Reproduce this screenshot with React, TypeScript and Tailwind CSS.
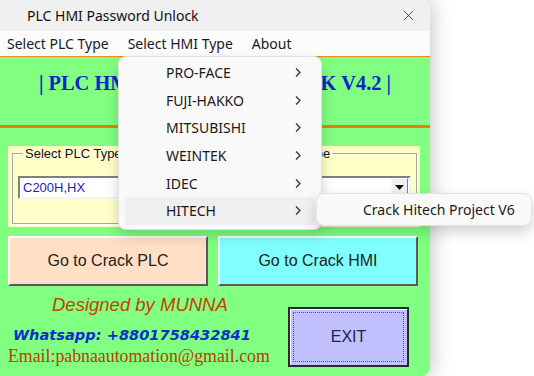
import { X } from 'lucide-react';

const hmiTypes = ['PRO-FACE', 'FUJI-HAKKO', 'MITSUBISHI', 'WEINTEK', 'IDEC', 'HITECH'];

function Chevron() {
  return (
    <svg width="8" height="11" viewBox="0 0 8 11" className="shrink-0">
      <path d="M2 1.5 L6 5.5 L2 9.5" fill="none" stroke="#333" strokeWidth="1.3" />
    </svg>
  );
}

function ComboBox({ value }: { value: string }) {
  return (
    <div className="flex h-[23px] items-center border-2 border-t-[#808080] border-l-[#808080] border-b-[#f4f4f4] border-r-[#f4f4f4] bg-white">
      <div className="flex h-full flex-1 items-center px-[3px] font-['Liberation_Sans',sans-serif] text-[13px] text-[#1c1cc4]">
        {value}
      </div>
      <div className="mr-[1px] flex h-[19px] w-[17px] items-center justify-center border border-t-[#f8f8f8] border-l-[#f8f8f8] border-b-[#808080] border-r-[#808080] bg-[#f0f0f0]">
        <svg width="9" height="5" viewBox="0 0 9 5">
          <path d="M0 0 H9 L4.5 5 Z" fill="#111" />
        </svg>
      </div>
    </div>
  );
}

function GroupBox({ title, value }: { title: string; value: string }) {
  return (
    <fieldset className="h-[78px] border border-[#a8a8a0] px-[5px] shadow-[inset_1px_1px_0_#ffffff,1px_1px_0_#ffffff]">
      <legend className="ml-[5px] px-[2px] font-['Liberation_Sans',sans-serif] text-[13px] leading-[15px] text-[#111]">
        {title}
      </legend>
      <div className="mt-[15px]">
        <ComboBox value={value} />
      </div>
    </fieldset>
  );
}

export default function App() {
  return (
    <div className="relative h-[376px] w-[534px] overflow-hidden bg-white font-['Noto_Sans',sans-serif]">
      <div className="flex h-[376px] w-[430px] flex-col overflow-hidden rounded-tr-lg rounded-br-lg shadow-[0_0_22px_rgba(0,0,0,0.28)]">
        {/* title bar */}
        <div className="flex h-[31px] items-center justify-between bg-[#f0f0f0] pl-[27px] pr-[13px]">
          <span className="text-[14px] text-[#111]">PLC HMI Password Unlock</span>
          <X size={17} strokeWidth={1.1} className="text-[#222]" />
        </div>

        {/* menu bar */}
        <div className="flex h-[25px] items-center gap-[19px] bg-[#fcfcfc] pl-[7px] text-[14px] text-[#1a1a1a]">
          <span>Select PLC Type</span>
          <span>Select HMI Type</span>
          <span>About</span>
        </div>

        {/* form body */}
        <div className="flex flex-1 flex-col border-t border-[#e88a1c] bg-[#80ff80]">
          <div className="flex h-[68px] justify-center pt-[11px] font-['Liberation_Serif',serif] text-[20.4px] font-bold text-[#0b24c8]">
            | PLC HMI PASSWORD CRACK V4.2 |
          </div>
          <div className="h-[3px] bg-[#e5800a]" />

          <div className="ml-2 mt-[18px] flex h-[81px] w-[412px] gap-[16px] bg-[#ffffc8] pl-[4px] pr-[3px]">
            <div className="w-[194px]">
              <GroupBox title="Select PLC Type" value="C200H,HX" />
            </div>
            <div className="w-[195px]">
              <GroupBox title="Select HMI Type" value="" />
            </div>
          </div>

          <div className="ml-2 mt-[9px] flex gap-[10px] font-['Liberation_Sans',sans-serif] text-[16px] text-[#222]">
            <button className="flex h-[50px] w-[200px] items-center justify-center border-2 border-t-[#fbfbfb] border-l-[#fbfbfb] border-b-[#5a5a5a] border-r-[#5a5a5a] bg-[#ffe0c6]">
              Go to Crack PLC
            </button>
            <button className="flex h-[50px] w-[200px] items-center justify-center border-2 border-t-[#fbfbfb] border-l-[#fbfbfb] border-b-[#5a5a5a] border-r-[#5a5a5a] bg-[#80ffff]">
              Go to Crack HMI
            </button>
          </div>

          <div className="flex flex-1">
            <div className="flex w-[288px] flex-col">
              <div className="mt-[8px] pl-[52px] font-['Liberation_Sans',sans-serif] text-[18.5px] italic leading-[22px] text-[#c84000]">
                Designed by MUNNA
              </div>
              <div className="mt-[9px] pl-[13px] font-['DejaVu_Sans',sans-serif] text-[14.6px] font-bold italic leading-[20px] text-[#0a30c8]">
                Whatsapp: +8801758432841
              </div>
              <div className="mt-[1px] pl-[8px] font-['Liberation_Serif',serif] text-[17.8px] leading-[20px] text-[#c03a00]">
                Email:pabnaautomation@gmail.com
              </div>
            </div>
            <div className="pt-[21px]">
              <button className="flex h-[60px] w-[121px] items-center justify-center border-2 border-[#2a2a2a] bg-[#c0c0ff] p-[3px] shadow-[inset_1px_1px_0_#ffffff]">
                <span className="flex h-full w-full items-center justify-center border border-dotted border-[#505080] font-['Liberation_Sans',sans-serif] text-[16px] text-[#202050]">
                  EXIT
                </span>
              </button>
            </div>
          </div>
        </div>
      </div>

      {/* HMI type dropdown */}
      <div className="absolute left-[118px] top-[56px] w-[204px] rounded-lg border border-[#e2e2e2] bg-[#f9f9f9] px-[6px] pb-[4px] pt-[2px] text-[14px] text-[#1a1a1a] shadow-[0_6px_14px_rgba(0,0,0,0.18)]">
        {hmiTypes.map((t) => (
          <div
            key={t}
            className={`flex h-[27.6px] items-center justify-between rounded pl-[41px] pr-[13px] ${t === 'HITECH' ? 'bg-[#efefef]' : ''}`}
          >
            <span>{t}</span>
            <Chevron />
          </div>
        ))}
      </div>

      {/* HITECH submenu */}
      <div className="absolute left-[316px] top-[193px] flex h-[33px] w-[216px] items-center rounded-lg border border-[#e2e2e2] bg-[#f9f9f9] pl-[46px] text-[14px] text-[#1a1a1a] shadow-[0_6px_14px_rgba(0,0,0,0.18)]">
        Crack Hitech Project V6
      </div>
    </div>
  );
}
